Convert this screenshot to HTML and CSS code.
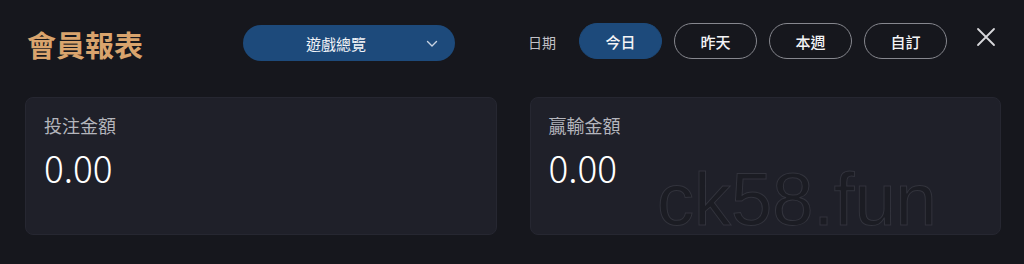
FILE: index.html
```html
<!DOCTYPE html>
<html lang="zh-Hant">
<head>
<meta charset="utf-8">
<link rel="stylesheet" href="styles.css">
</head>
<body>
<div class="panel">
  <header class="header">
    <h1 class="title">會員報表</h1>
    <button class="select">
      <span class="select-text">遊戲總覽</span>
      <svg class="chevron" width="12" height="8" viewBox="0 0 12 8"><path d="M1.5 1.5 L6 6 L10.5 1.5" fill="none" stroke="#c8d3e2" stroke-width="1.4" stroke-linecap="round" stroke-linejoin="round"/></svg>
    </button>
    <span class="date-label">日期</span>
    <div class="pills">
      <button class="pill active">今日</button>
      <button class="pill">昨天</button>
      <button class="pill">本週</button>
      <button class="pill">自訂</button>
    </div>
    <button class="close">
      <svg width="20" height="20" viewBox="0 0 20 20"><path d="M2 2 L18 18 M18 2 L2 18" stroke="#d8d8dc" stroke-width="1.8" stroke-linecap="round"/></svg>
    </button>
  </header>
  <section class="cards">
    <div class="card">
      <div class="card-label">投注金額</div>
      <div class="card-value">0.00</div>
    </div>
    <div class="card">
      <div class="card-label">贏輸金額</div>
      <div class="card-value">0.00</div>
    </div>
  </section>
  <div class="watermark">ck58.fun</div>
</div>
</body>
</html>
```
FILE: styles.css
```css
html, body {
  margin: 0;
  padding: 0;
  background: #16171d;
}
body {
  width: 1024px;
  height: 264px;
  overflow: hidden;
  font-family: "Noto Sans CJK TC", "Noto Sans", sans-serif;
  color: #ffffff;
}
.panel {
  position: relative;
  height: 264px;
}
.header {
  display: flex;
  align-items: center;
  height: 84px;
  padding: 0 0 0 27px;
}
.title {
  margin: 0;
  width: 116px;
  font-size: 29px;
  font-weight: 700;
  color: #d9a46d;
  letter-spacing: 0;
  line-height: 1;
  padding-top: 4px;
}
.select {
  margin-left: 100px;
  width: 212px;
  height: 36px;
  margin-top: 2px;
  border: none;
  border-radius: 18px;
  background: #1d4a7b;
  display: flex;
  align-items: center;
  justify-content: center;
  position: relative;
  font-family: inherit;
  cursor: pointer;
}
.select-text {
  font-size: 15px;
  color: #f2f4f8;
  margin-left: -26px;
}
.chevron {
  position: absolute;
  right: 17px;
  top: 15px;
}
.date-label {
  margin-left: 73px;
  font-size: 14px;
  color: #c2c2c8;
  width: 30px;
}
.pills {
  display: flex;
  gap: 12px;
  margin-left: 21px;
  margin-top: -2px;
}
.pill {
  width: 83px;
  height: 36px;
  border-radius: 18px;
  border: 1px solid #86878e;
  background: transparent;
  color: #f4f4f6;
  font-family: inherit;
  font-size: 15px;
  font-weight: 500;
  padding: 0;
}
.pill.active {
  background: #1d4a7b;
  border-color: #1d4a7b;
}
.close {
  margin-left: 29px;
  margin-top: -10px;
  width: 20px;
  height: 20px;
  padding: 0;
  border: none;
  background: transparent;
  display: flex;
}
.cards {
  display: flex;
  gap: 33px;
  padding: 13px 23px 0 25px;
}
.card {
  flex: 1;
  height: 138px;
  box-sizing: border-box;
  background: #1f2029;
  border: 1px solid #262731;
  border-radius: 8px;
  padding: 14px 18px;
}
.card-label {
  font-size: 18px;
  color: #b4b5bc;
  line-height: 26px;
}
.card-value {
  margin-top: 9px;
  font-family: "Noto Sans CJK TC", "Noto Sans", sans-serif;
  font-weight: 300;
  font-size: 37px;
  line-height: 40px;
  color: #ffffff;
}
.watermark {
  position: absolute;
  left: 657px;
  top: 160px;
  font-family: "Liberation Sans", Arial, sans-serif;
  font-size: 74px;
  line-height: 80px;
  color: #1b1c23;
  -webkit-text-stroke: 1px #32333c;
  pointer-events: none;
}
```
